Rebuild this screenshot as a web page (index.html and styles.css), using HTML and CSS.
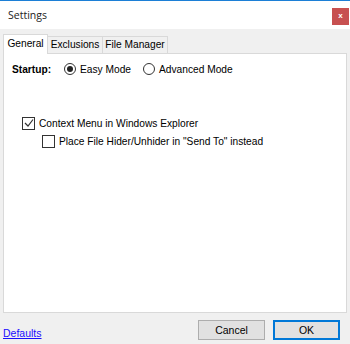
FILE: index.html
```html
<!DOCTYPE html>
<html lang="en">
<head>
    <meta charset="UTF-8">
    <title>Settings</title>
    <link rel="stylesheet" href="styles.css">
</head>
<body>
    <div class="window">
        <div class="titlebar">
            <span class="title">Settings</span>
            <span class="close">x</span>
        </div>
        <div class="body">
            <div class="tabs">
                <div class="tab active">General</div>
                <div class="tab">Exclusions</div>
                <div class="tab">File Manager</div>
            </div>
            <div class="panel">
                <div class="row startup">
                    <span class="label">Startup:</span>
                    <span class="radio checked"></span>
                    <span class="opt">Easy Mode</span>
                    <span class="radio"></span>
                    <span class="opt">Advanced Mode</span>
                </div>
                <div class="row check first">
                    <span class="box">
                        <svg width="10" height="10" viewBox="0 0 10 10"><path d="M1 5 L4 8 L9 1.5" fill="none" stroke="#333" stroke-width="1.2"/></svg>
                    </span>
                    <span>Context Menu in Windows Explorer</span>
                </div>
                <div class="row check sub">
                    <span class="box"></span>
                    <span>Place File Hider/Unhider in "Send To" instead</span>
                </div>
            </div>
            <div class="footer">
                <a href="#" class="link">Defaults</a>
                <div class="buttons">
                    <button class="btn">Cancel</button>
                    <button class="btn default">OK</button>
                </div>
            </div>
        </div>
    </div>
</body>
</html>
```
FILE: styles.css
```css
html, body {
    margin: 0;
    padding: 0;
}
body {
    width: 350px;
    height: 344px;
    font-family: "Liberation Sans", Arial, sans-serif;
    font-size: 10.2px;
    color: #000;
    overflow: hidden;
}
.window {
    display: flex;
    flex-direction: column;
    height: 344px;
    background: #f0f0f0;
}
.titlebar {
    height: 28px;
    border-top: 1px solid #1c7fd6;
    background: #fff;
    display: flex;
    align-items: center;
    justify-content: space-between;
    padding-left: 8px;
    padding-right: 1px;
}
.title {
    font-family: "Open Sans", sans-serif;
    font-size: 10.5px;
    color: #222;
}
.close {
    width: 17px;
    height: 17px;
    margin-top: 2px;
    background: #c75050;
    color: #fff;
    font-size: 8px;
    font-weight: bold;
    display: flex;
    align-items: center;
    justify-content: center;
    line-height: 1;
}
.body {
    flex: 1;
    display: flex;
    flex-direction: column;
    padding: 0 3px;
}
.tabs {
    display: flex;
    align-items: flex-end;
    height: 24px;
    position: relative;
    z-index: 1;
}
.tab {
    height: 17px;
    line-height: 16px;
    box-sizing: border-box;
    white-space: nowrap;
    text-align: center;
    border: 1px solid #d9d9d9;
    border-left: none;
    border-bottom: none;
    background: #f0f0f0;
}
.tab.active {
    height: 20px;
    line-height: 18px;
    width: 45px;
    background: #fff;
    border-left: 1px solid #d9d9d9;
    margin-bottom: -1px;
}
.tab:nth-child(2) {
    width: 55px;
}
.tab:nth-child(3) {
    width: 65px;
}
.panel {
    height: 260px;
    box-sizing: border-box;
    background: #fff;
    border: 1px solid #d9d9d9;
    padding: 8px 8px 0;
}
.row {
    display: flex;
    align-items: center;
}
.startup {
    height: 14px;
}
.label {
    font-weight: bold;
    margin-right: 13px;
}
.radio {
    width: 10px;
    height: 10px;
    border: 1px solid #333;
    border-radius: 50%;
    display: flex;
    align-items: center;
    justify-content: center;
    margin-right: 4px;
}
.radio.checked::after {
    content: "";
    width: 6px;
    height: 6px;
    border-radius: 50%;
    background: #222;
}
.opt {
    margin-right: 12px;
}
.check {
    height: 14px;
}
.first {
    margin-top: 40px;
    padding-left: 10px;
}
.sub {
    margin-top: 4px;
    padding-left: 30px;
}
.box {
    width: 11px;
    height: 11px;
    border: 1px solid #333;
    display: flex;
    align-items: center;
    justify-content: center;
    margin-right: 4px;
    flex: none;
}
.footer {
    flex: 1;
    display: flex;
    justify-content: space-between;
    align-items: center;
    padding-top: 1px;
}
.link {
    color: #1a0dff;
    font-size: 10.5px;
    margin-top: 8px;
}
.buttons {
    display: flex;
    gap: 8px;
    margin-right: 7px;
    margin-top: 1px;
}
.btn {
    width: 67px;
    height: 20px;
    box-sizing: border-box;
    background: #e1e1e1;
    border: 1px solid #adadad;
    font-family: "Liberation Sans", Arial, sans-serif;
    font-size: 10.5px;
    padding: 0;
    color: #000;
}
.btn.default {
    border: 2px solid #0078d7;
}
```
